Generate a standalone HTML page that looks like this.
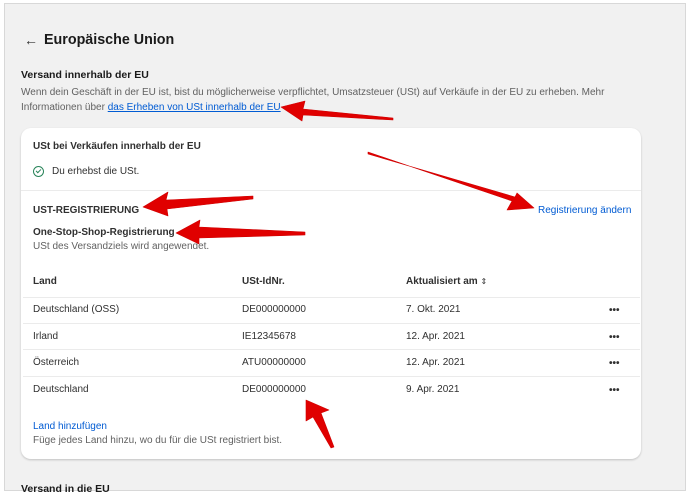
<!DOCTYPE html>
<html><head><meta charset="utf-8"><style>
*{margin:0;padding:0;box-sizing:border-box}
body{width:690px;height:494px;background:#fff;font-family:"Liberation Sans",sans-serif;color:#303030;position:relative;overflow:hidden}
.frame{position:absolute;left:4px;top:3px;width:682px;height:488px;background:#f1f1f1;border:1px solid #d8d8d8}
.a{position:absolute;white-space:nowrap}
.card{position:absolute;left:21px;top:128px;width:620px;height:331px;background:#fff;border-radius:10px;box-shadow:0 1px 2px rgba(0,0,0,.2)}
.line{position:absolute;height:1px;background:#ebebeb}
.t{font-size:10px;color:#303030}
.b{font-weight:bold}
.g{color:#616161;font-size:10px}
.lk{color:#005bd3;font-size:10px}
.dots{position:absolute;left:609px;font-size:10px;font-weight:bold;letter-spacing:0}
</style></head><body>
<div class="frame"></div>
<div class="a" style="left:24px;top:32px;font-size:14px">&#8592;</div>
<div class="a b" style="left:44px;top:32px;font-size:14.3px;color:#1a1a1a">Europäische Union</div>
<div class="a b" style="left:21px;top:69px;font-size:10.5px;color:#1a1a1a">Versand innerhalb der EU</div>
<div class="a g" style="left:21px;top:87px">Wenn dein Geschäft in der EU ist, bist du möglicherweise verpflichtet, Umsatzsteuer (USt) auf Verkäufe in der EU zu erheben. Mehr</div>
<div class="a g" style="left:21px;top:102px">Informationen über <span style="color:#005bd3;text-decoration:underline">das Erheben von USt innerhalb der EU</span></div>
<div class="card"></div>
<div class="a t b" style="left:33px;top:141px">USt bei Verkäufen innerhalb der EU</div>
<div class="a" style="left:33px;top:166px;width:11px;height:11px;border:1.3px solid #29845a;border-radius:50%"></div>
<div class="a" style="left:37px;top:168px;width:3px;height:5px;border:solid #29845a;border-width:0 1.3px 1.3px 0;transform:rotate(45deg)"></div>
<div class="a t" style="left:52px;top:166px">Du erhebst die USt.</div>
<div class="line" style="left:21px;top:190px;width:620px"></div>
<div class="a t b" style="left:33px;top:205px">UST-REGISTRIERUNG</div>
<div class="a lk" style="left:538px;top:205px">Registrierung ändern</div>
<div class="a t b" style="left:33px;top:227px">One-Stop-Shop-Registrierung</div>
<div class="a g" style="left:33px;top:241px">USt des Versandziels wird angewendet.</div>
<div class="a t b" style="left:33px;top:276px">Land</div>
<div class="a t b" style="left:242px;top:276px">USt-IdNr.</div>
<div class="a t b" style="left:406px;top:276px">Aktualisiert am <span style="font-weight:normal;font-size:8px">&#8661;</span></div>
<div class="line" style="left:23px;top:297px;width:617px"></div>
<div class="a t" style="left:33px;top:304px">Deutschland (OSS)</div><div class="a t" style="left:242px;top:304px">DE000000000</div><div class="a t" style="left:406px;top:304px">7. Okt. 2021</div><div class="a dots" style="top:305px">•••</div>
<div class="line" style="left:23px;top:323px;width:617px"></div>
<div class="a t" style="left:33px;top:331px">Irland</div><div class="a t" style="left:242px;top:331px">IE12345678</div><div class="a t" style="left:406px;top:331px">12. Apr. 2021</div><div class="a dots" style="top:332px">•••</div>
<div class="line" style="left:23px;top:349px;width:617px"></div>
<div class="a t" style="left:33px;top:357px">Österreich</div><div class="a t" style="left:242px;top:357px">ATU00000000</div><div class="a t" style="left:406px;top:357px">12. Apr. 2021</div><div class="a dots" style="top:358px">•••</div>
<div class="line" style="left:23px;top:376px;width:617px"></div>
<div class="a t" style="left:33px;top:384px">Deutschland</div><div class="a t" style="left:242px;top:384px">DE000000000</div><div class="a t" style="left:406px;top:384px">9. Apr. 2021</div><div class="a dots" style="top:385px">•••</div>
<div class="a lk" style="left:33px;top:421px">Land hinzufügen</div>
<div class="a g" style="left:33px;top:435px">Füge jedes Land hinzu, wo du für die USt registriert bist.</div>
<div class="a b" style="left:21px;top:483px;font-size:10.5px;color:#1a1a1a">Versand in die EU</div>
<svg class="a" style="left:0;top:0" width="690" height="494">
<g fill="#e00000" stroke="#d00000" stroke-width="0.6" stroke-linejoin="round">
<polygon points="393,118 303,109 305,101 281,107 302,121 303,115 393,120"/>
<polygon points="368,152 512,201 507,210 534,208 517,193 515,197 368,154"/>
<polygon points="253,196 166,200 168,192 143,207 168,216 167,209 253,199"/>
<polygon points="305,232 199,227 200,220 176,233 199,244 199,238 305,235"/>
<polygon points="334,447 321,413 329,410 306,400 306,421 313,417 331,448"/>
</g></svg>
</body></html>
